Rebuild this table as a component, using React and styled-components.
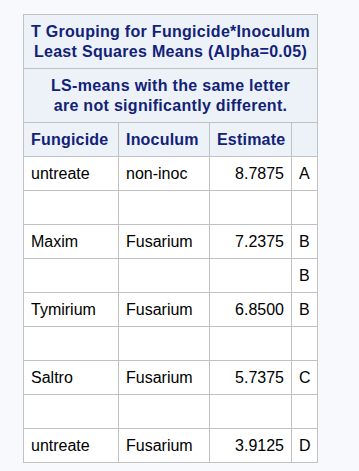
import React from 'react';
import styled, { createGlobalStyle } from 'styled-components';

const GlobalStyle = createGlobalStyle`
  html, body {
    margin: 0;
    padding: 0;
    background: #f8f9fd;
  }
  body {
    font-family: "Liberation Sans", Arial, sans-serif;
  }
`;

const Page = styled.div`
  padding: 14px 0 0 23px;
`;

const Table = styled.table`
  border-collapse: collapse;
  border: 1px solid #c1c1c1;
  font-size: 16px;
  table-layout: fixed;
  width: 294px;

  th, td {
    border: 1px solid #c1c1c1;
  }
`;

const Title = styled.th`
  background: #edf2f9;
  color: #112277;
  font-weight: bold;
  text-align: center;
  line-height: 20px;
  letter-spacing: 0.3px;
  height: 54px;
  padding: 0 2px;
  box-sizing: border-box;
`;

const HeadCell = styled.th`
  background: #edf2f9;
  color: #112277;
  font-weight: bold;
  text-align: left;
  letter-spacing: 0.2px;
  height: 33px;
  padding: 0 7px;
  white-space: nowrap;
`;

const Cell = styled.td`
  background: #fff;
  color: #000;
  height: 33px;
  padding: 0 7px;
  text-align: ${p => (p.$num ? 'right' : 'left')};
  white-space: nowrap;
`;

const rows = [
  ['untreate', 'non-inoc', '8.7875', 'A'],
  ['', '', '', ''],
  ['Maxim', 'Fusarium', '7.2375', 'B'],
  ['', '', '', 'B'],
  ['Tymirium', 'Fusarium', '6.8500', 'B'],
  ['', '', '', ''],
  ['Saltro', 'Fusarium', '5.7375', 'C'],
  ['', '', '', ''],
  ['untreate', 'Fusarium', '3.9125', 'D'],
];

export default function App() {
  return (
    <>
      <GlobalStyle />
      <Page>
        <Table>
          <colgroup>
            <col style={{ width: 95 }} />
            <col style={{ width: 91 }} />
            <col style={{ width: 82 }} />
            <col style={{ width: 26 }} />
          </colgroup>
          <thead>
            <tr>
              <Title colSpan={4}>
                T Grouping for Fungicide*Inoculum<br />
                Least Squares Means (Alpha=0.05)
              </Title>
            </tr>
            <tr>
              <Title colSpan={4}>
                LS-means with the same letter<br />
                are not significantly different.
              </Title>
            </tr>
            <tr>
              <HeadCell>Fungicide</HeadCell>
              <HeadCell>Inoculum</HeadCell>
              <HeadCell>Estimate</HeadCell>
              <HeadCell />
            </tr>
          </thead>
          <tbody>
            {rows.map((r, i) => (
              <tr key={i}>
                <Cell>{r[0]}</Cell>
                <Cell>{r[1]}</Cell>
                <Cell $num>{r[2]}</Cell>
                <Cell>{r[3]}</Cell>
              </tr>
            ))}
          </tbody>
        </Table>
      </Page>
    </>
  );
}
